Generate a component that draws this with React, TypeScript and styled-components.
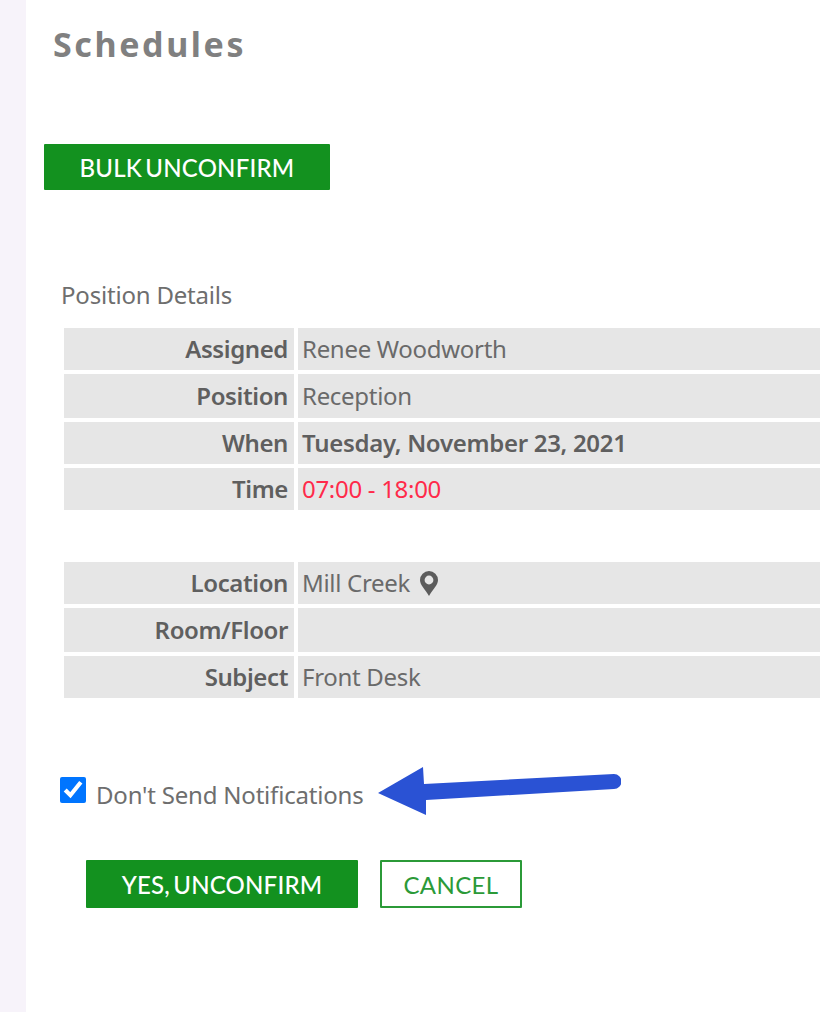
import React from 'react';
import styled, { createGlobalStyle } from 'styled-components';

const GlobalStyle = createGlobalStyle`
  html, body {
    margin: 0;
    padding: 0;
    background: #fff;
    overflow: hidden;
  }
`;

const firstTable = [
  { label: 'Assigned', value: 'Renee Woodworth' },
  { label: 'Position', value: 'Reception', tall: true },
  { label: 'When', value: 'Tuesday, November 23, 2021', variant: 'bold' },
  { label: 'Time', value: '07:00 - 18:00', variant: 'alert' },
];

const secondTable = [
  { label: 'Location', value: 'Mill Creek', pin: true },
  { label: 'Room/Floor', value: '', tall: true },
  { label: 'Subject', value: 'Front Desk' },
];

function App() {
  const renderRows = (rows: Row[]) =>
    rows.map((row) => (
      <DetailRow key={row.label} $tall={row.tall}>
        <LabelCell>{row.label}</LabelCell>
        <ValueCell $variant={row.variant}>
          {row.value}
          {row.pin && <PinIcon />}
        </ValueCell>
      </DetailRow>
    ));

  return (
    <Page>
      <GlobalStyle />
      <Sidebar />
      <Main>
        <Title>Schedules</Title>
        <BulkButton>BULK UNCONFIRM</BulkButton>
        <SectionLabel>Position Details</SectionLabel>
        <DetailTable>{renderRows(firstTable)}</DetailTable>
        <SecondTable>{renderRows(secondTable)}</SecondTable>
        <NotifyRow>
          <NotifyCheck type="checkbox" defaultChecked />
          <NotifyText>Don't Send Notifications</NotifyText>
          <ArrowIcon />
        </NotifyRow>
        <Actions>
          <ConfirmButton>YES, UNCONFIRM</ConfirmButton>
          <CancelButton>CANCEL</CancelButton>
        </Actions>
      </Main>
    </Page>
  );
}

interface Row {
  label: string;
  value: string;
  tall?: boolean;
  pin?: boolean;
  variant?: string;
}

const PinIcon = () => (
  <PinSvg viewBox="0 0 20 26" width="20" height="26">
    <path
      fillRule="evenodd"
      fill="#5c5c5c"
      d="M10 1a9 9 0 0 0-9 9c0 5 5 9 9 16 4-7 9-11 9-16a9 9 0 0 0-9-9zm0 4.6a4.4 4.4 0 1 1 0 8.8 4.4 4.4 0 0 1 0-8.8z"
    />
  </PinSvg>
);

const ArrowIcon = () => (
  <ArrowSvg viewBox="0 0 243 49" width="243" height="49">
    <path
      fill="#2a52d4"
      d="M0 26 L45 0 L46 17 L236 7 a7.5 7.5 0 0 1 0 15 L48 33 L48 48 Z"
    />
  </ArrowSvg>
);

const Page = styled.div`
  display: flex;
  width: 820px;
  height: 1012px;
  overflow: hidden;
  font-family: 'Noto Sans', sans-serif;
  color: #666;
`;

const Sidebar = styled.div`
  width: 26px;
  flex-shrink: 0;
  background: #f7f3fa;
`;

const Main = styled.main`
  flex: 1;
  min-width: 0;
  padding-left: 18px;
`;

const Title = styled.h1`
  margin: 23px 0 0 9px;
  font-size: 34px;
  line-height: 42px;
  font-weight: 700;
  letter-spacing: 2.6px;
  color: #808080;
`;

const Button = styled.button`
  display: block;
  box-sizing: border-box;
  padding: 1px 0 0;
  border-radius: 1px;
  font-family: Lato, sans-serif;
  font-size: 24px;
  font-weight: 500;
  letter-spacing: 0.2px;
`;

const BulkButton = styled(Button)`
  width: 286px;
  height: 46px;
  margin-top: 79px;
  background: #13911f;
  border: none;
  color: #fff;
  word-spacing: -3px;
`;

const SectionLabel = styled.div`
  margin: 90px 0 0 17px;
  font-size: 24px;
  line-height: 30px;
  letter-spacing: -0.2px;
  color: #6e6e6e;
`;

const DetailTable = styled.div`
  display: flex;
  flex-direction: column;
  gap: 4px;
  margin: 18px 0 0 20px;
`;

const SecondTable = styled(DetailTable)`
  margin-top: 52px;
`;

const DetailRow = styled.div<{ $tall?: boolean }>`
  display: grid;
  grid-template-columns: 230px 540px;
  column-gap: 4px;
  height: ${(p) => (p.$tall ? '44px' : '42px')};
  font-size: 24px;
  letter-spacing: -0.3px;
`;

const Cell = styled.div`
  display: flex;
  align-items: center;
  box-sizing: border-box;
  padding-bottom: 2px;
  background: #e6e6e6;
`;

const LabelCell = styled(Cell)`
  justify-content: flex-end;
  padding-right: 6px;
  font-weight: 600;
  letter-spacing: -0.4px;
  color: #5f5f5f;
`;

const ValueCell = styled(Cell)<{ $variant?: string }>`
  padding-left: 4px;
  font-weight: ${(p) => (p.$variant === 'bold' ? 600 : 400)};
  color: ${(p) =>
    p.$variant === 'alert'
      ? '#ff2a4a'
      : p.$variant === 'bold'
        ? '#5f5f5f'
        : '#6a6a6a'};
`;

const PinSvg = styled.svg`
  margin: 2px 0 0 9px;
  flex-shrink: 0;
`;

const NotifyRow = styled.div`
  display: flex;
  align-items: flex-start;
  margin: 78px 0 0 16px;
  height: 48px;
`;

const NotifyCheck = styled.input`
  width: 26px;
  height: 26px;
  margin: 1px 0 0 0;
  accent-color: #0075ff;
`;

const NotifyText = styled.span`
  margin: 3px 0 0 10px;
  font-size: 24px;
  line-height: 32px;
  letter-spacing: -0.2px;
  color: #6e6e6e;
`;

const ArrowSvg = styled.svg`
  margin: -9px 0 0 15px;
  flex-shrink: 0;
`;

const Actions = styled.div`
  display: flex;
  gap: 22px;
  margin: 36px 0 0 42px;
`;

const ConfirmButton = styled(Button)`
  width: 272px;
  height: 48px;
  background: #13911f;
  border: none;
  color: #fff;
  word-spacing: -3px;
`;

const CancelButton = styled(Button)`
  width: 142px;
  height: 48px;
  background: #fff;
  border: 2px solid #2b9a38;
  color: #2b9a38;
  font-weight: 400;
  letter-spacing: 0.4px;
`;

export default App;
